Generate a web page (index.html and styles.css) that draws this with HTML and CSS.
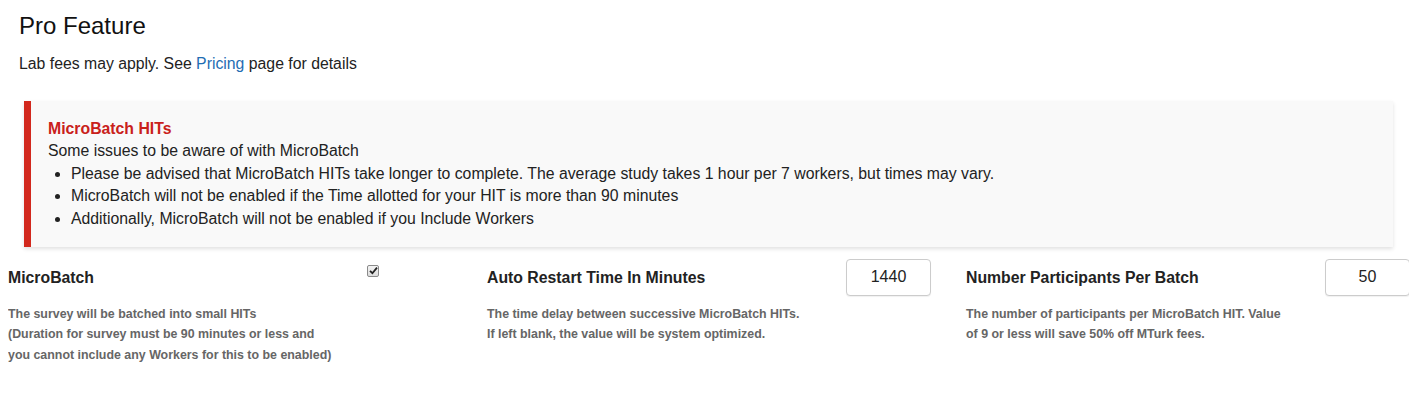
FILE: index.html
```html
<!DOCTYPE html>
<html lang="en">
<head>
    <meta charset="UTF-8">
    <meta name="viewport" content="width=device-width, initial-scale=1.0">
    <title>Pro Feature</title>
    <link rel="stylesheet" href="styles.css">
</head>
<body>

<div class="header">
    <h2>Pro Feature</h2>
    <p>Lab fees may apply. See <a href="#">Pricing</a> page for details</p>
</div>

<!-- warning box -->
<div class="alert">
    <div class="alert-title">MicroBatch HITs</div>
    <div>Some issues to be aware of with MicroBatch</div>
    <ul>
        <li>Please be advised that MicroBatch HITs take longer to complete. The average study takes 1 hour per 7 workers, but times may vary.</li>
        <li>MicroBatch will not be enabled if the Time allotted for your HIT is more than 90 minutes</li>
        <li>Additionally, MicroBatch will not be enabled if you Include Workers</li>
    </ul>
</div>

<!-- settings -->
<div class="settings">
    <div class="setting">
        <div class="setting-row">
            <label class="setting-label">MicroBatch</label>
            <div class="setting-control">
                <span class="check">
                    <svg width="9" height="9" viewBox="0 0 9 9"><path d="M1 4.8 L3.4 7.2 L8 1.6" fill="none" stroke="#222" stroke-width="1.8"/></svg>
                </span>
            </div>
        </div>
        <div class="setting-help">
            The survey will be batched into small HITs<br>
            (Duration for survey must be 90 minutes or less and<br>
            you cannot include any Workers for this to be enabled)
        </div>
    </div>
    <div class="setting">
        <div class="setting-row">
            <label class="setting-label">Auto Restart Time In Minutes</label>
            <div class="setting-control">
                <input type="text" class="num" value="1440">
            </div>
        </div>
        <div class="setting-help">
            The time delay between successive MicroBatch HITs.<br>
            If left blank, the value will be system optimized.
        </div>
    </div>
    <div class="setting">
        <div class="setting-row">
            <label class="setting-label">Number Participants Per Batch</label>
            <div class="setting-control">
                <input type="text" class="num" value="50">
            </div>
        </div>
        <div class="setting-help">
            The number of participants per MicroBatch HIT. Value<br>
            of 9 or less will save 50% off MTurk fees.
        </div>
    </div>
</div>

</body>
</html>
```

FILE: styles.css
```css
body {
    margin: 8px;
    font-family: "Liberation Sans", Arial, sans-serif;
    font-size: 15.8px;
    line-height: 22.6px;
    color: #222;
    background: #fff;
}

/* header */
.header {
    padding: 4px 11px 0;
}
.header h2 {
    margin: 0;
    font-size: 24px;
    font-weight: normal;
    line-height: 27px;
    color: #111;
}
.header p {
    margin: 14px 0 0;
}
.header a {
    color: #1f6db3;
    text-decoration: none;
}

/* warning box */
.alert {
    margin: 25px 16px 0;
    padding: 17px 20px 16px 17px;
    background: #f9f9f9;
    border-left: 7px solid #d2281d;
    box-shadow: 0 2px 4px rgba(0, 0, 0, 0.12);
}
.alert-title {
    font-weight: bold;
    color: #c9211b;
}
.alert ul {
    margin: 0;
    padding-left: 23px;
}

/* settings row */
.settings {
    display: grid;
    grid-template-columns: repeat(3, 479px);
    margin-top: 12px;
}
.setting {
    padding-right: 35px;
}
.setting-row {
    display: flex;
    align-items: center;
    height: 37px;
}
.setting-label {
    flex: 1;
    font-weight: bold;
    padding-top: 3px;
}
.setting-control {
    width: 85px;
    align-self: stretch;
}
.check {
    display: flex;
    align-items: center;
    justify-content: center;
    box-sizing: border-box;
    width: 12px;
    height: 12px;
    margin-top: 6px;
    border: 1px solid #8a8a8a;
    border-radius: 2px;
    background: linear-gradient(#f4f4f4, #dcdcdc);
}
.num {
    box-sizing: border-box;
    width: 85px;
    height: 37px;
    border: 1px solid #ccc;
    border-radius: 4px;
    box-shadow: 0 1px 1px rgba(0, 0, 0, 0.06);
    text-align: center;
    font-family: inherit;
    font-size: 16px;
    color: #222;
}
.setting-help {
    margin-top: 8px;
    font-size: 12.4px;
    line-height: 20.5px;
    font-weight: bold;
    color: #666;
}
```
